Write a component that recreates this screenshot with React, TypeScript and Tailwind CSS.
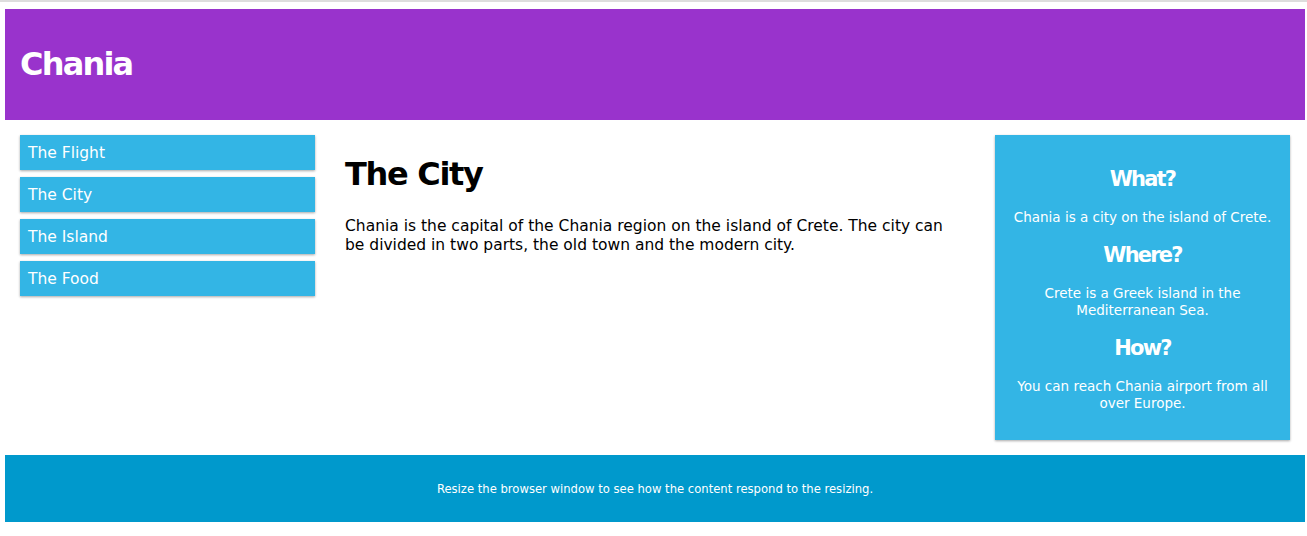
export default function App() {
  const menu = ["The Flight", "The City", "The Island", "The Food"];
  return (
    <div className="w-[1307px] h-[536px] bg-white font-['DejaVu_Sans',sans-serif] overflow-hidden">
      <div className="h-[2px] bg-[#dddddd]" />
      <div className="pl-[5px] pt-[7px] w-[1305px]">
        <header className="h-[111px] bg-[#9933cc] text-white flex items-center px-[15px]">
          <h1 className="text-[32px] leading-none font-bold tracking-[-1.8px] -mt-[1px]">Chania</h1>
        </header>
        <div className="flex">
          <nav className="w-[325px] p-[15px]">
            <ul className="flex flex-col gap-[7px]">
              {menu.map((m) => (
                <li
                  key={m}
                  className="h-[35px] flex items-center px-[8px] pt-[2px] bg-[#33b5e5] text-white text-[15.5px] shadow-[0_1px_3px_rgba(0,0,0,0.12),0_1px_2px_rgba(0,0,0,0.24)]"
                >
                  {m}
                </li>
              ))}
            </ul>
          </nav>
          <main className="w-[650px] px-[15px] pt-[15px] text-black">
            <h1 className="mt-[21px] text-[32px] leading-[37px] font-bold tracking-[-1.3px]">The City</h1>
            <p className="mt-[24px] text-[15.5px] leading-[19px]">
              Chania is the capital of the Chania region on the island of Crete. The city can
              <br />
              be divided in two parts, the old town and the modern city.
            </p>
          </main>
          <div className="w-[325px] p-[15px]">
            <aside className="bg-[#33b5e5] text-white text-center px-[15px] pt-[15px] pb-[15px] shadow-[0_1px_3px_rgba(0,0,0,0.12),0_1px_2px_rgba(0,0,0,0.24)]">
              <h2 className="mt-[17px] text-[21px] leading-[25px] font-bold tracking-[-1.8px]">What?</h2>
              <p className="mt-[17px] text-[13.5px] leading-[17px]">Chania is a city on the island of Crete.</p>
              <h2 className="mt-[17px] text-[21px] leading-[25px] font-bold tracking-[-1.8px]">Where?</h2>
              <p className="mt-[17px] text-[13.5px] leading-[17px]">
                Crete is a Greek island in the
                <br />
                Mediterranean Sea.
              </p>
              <h2 className="mt-[17px] text-[21px] leading-[25px] font-bold tracking-[-1.8px]">How?</h2>
              <p className="mt-[17px] mb-[13px] text-[13.5px] leading-[17px]">
                You can reach Chania airport from all
                <br />
                over Europe.
              </p>
            </aside>
          </div>
        </div>
        <footer className="h-[67px] bg-[#0099cc] text-white flex items-center justify-center pt-[2px]">
          <p className="text-[11.6px]">Resize the browser window to see how the content respond to the resizing.</p>
        </footer>
      </div>
    </div>
  );
}
